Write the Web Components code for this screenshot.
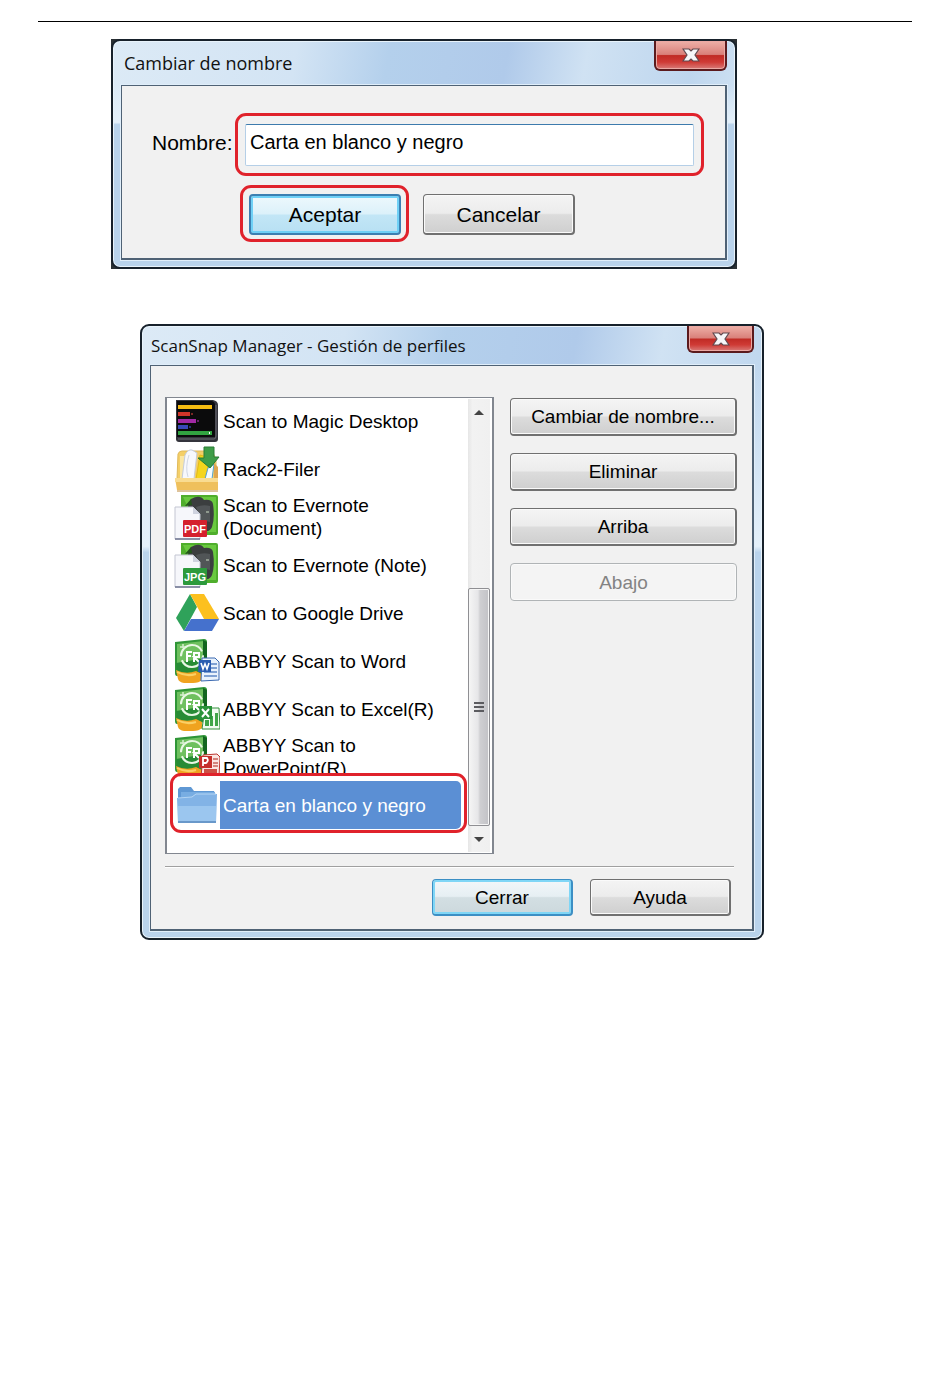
<!DOCTYPE html>
<html lang="es">
<head>
<meta charset="utf-8">
<meta name="viewport" content="width=device-width, initial-scale=1">
<title>Gestión de perfiles</title>
<style>
  body {
    margin: 0;
    background: #fff;
    color: #000;
    font-family: "Liberation Sans", Arial, sans-serif;
  }
  main {
    margin: 21px 38px 0;
    border-top: 1px solid #000;
    padding-top: 17px;
  }
  .rename {
    max-width: 626px;
    margin-left: 73px;
  }
  .manager {
    --title-height: 39px;
    --title-size: 17px;
    --title-indent: 1px;
    --close-width: 67px;
    --close-height: 27px;
    --corner: transparent;
    max-width: 624px;
    margin: 55px 0 0 102px;
  }
</style>
</head>
<body>
<main>
  <win-dialog class="rename" heading="Cambiar de nombre">
    <rename-form></rename-form>
  </win-dialog>
  <win-dialog class="manager" heading="ScanSnap Manager - Gestión de perfiles">
    <profile-manager></profile-manager>
  </win-dialog>
</main>

<script>
function makeTemplate(html) {
  const template = document.createElement('template')
  template.innerHTML = html
  return template
}

const dialogTemplate = makeTemplate(`
<style>
  :host {
    display: block;
    background: var(--corner, #2a3034);
  }
  .frame {
    border: 2px solid #17212b;
    border-radius: 9px;
    padding: 0 8px 7px;
    background:
      linear-gradient(to bottom, transparent 44px, #e4f0fa 36%, #b9d3ec 37%, #b9d3ec),
      linear-gradient(100deg, #dceaf6 0, #d3e4f4 28%, #b4d0ec 42%, #b0caea 60%, #d0e2f3 72%, #bed6ee 88%, #d5e6f5);
    box-shadow: inset 0 0 0 1px #e8f3fb;
  }
  header {
    display: flex;
    align-items: flex-start;
    height: var(--title-height, 44px);
  }
  h2 {
    flex: 1;
    margin: 0;
    padding-left: var(--title-indent, 3px);
    font: var(--title-size, 18px)/var(--title-height, 44px) "Open Sans", "Noto Sans", sans-serif;
    color: #111;
    white-space: nowrap;
  }
  button {
    display: flex;
    align-items: center;
    justify-content: center;
    box-sizing: border-box;
    width: var(--close-width, 73px);
    height: var(--close-height, 30px);
    padding: 0;
    border: 2px solid #5b1a1d;
    border-top: 0;
    border-radius: 0 0 6px 6px;
    background: linear-gradient(#eeb0a8 0, #d9807a 48%, #c02b25 52%, #cf3a35 75%, #d97b78 100%);
    box-shadow: inset 0 0 0 1px #eba9a4;
  }
  .body {
    border: 1px solid #4f6275;
    border-width: 1px 2px 2px 1px;
    background: #f1f1f1;
    box-shadow: 0 0 0 1px #e0eefa;
  }
</style>
<div class="frame">
  <header>
    <h2></h2>
    <button type="button" aria-label="Cerrar ventana">
      <svg width="18" height="16" viewBox="0 0 18 16">
        <path d="M1 2h6l2 2 2-2h6l-4 6 4 6h-6l-2-2-2 2H1l4-6z" fill="#f6f6f8" stroke="#60494f" stroke-width="1.2"/>
      </svg>
    </button>
  </header>
  <div class="body"><slot></slot></div>
</div>`)

customElements.define('win-dialog', class extends HTMLElement {
  constructor() {
    super()

    this.attachShadow({ mode: 'open' })
    this.shadowRoot.appendChild(dialogTemplate.content.cloneNode(true))
  }

  connectedCallback() {
    this.shadowRoot.querySelector('h2').textContent = this.getAttribute('heading')
  }
})

const buttonTemplate = makeTemplate(`
<style>
  :host {
    display: block;
    height: 37px;
    font-size: 19px;
  }
  button {
    display: block;
    box-sizing: border-box;
    width: 100%;
    height: 100%;
    padding: 1px 0 0;
    border: 1px solid #707070;
    border-width: 1px 2px 2px 1px;
    border-radius: 4px;
    background: linear-gradient(#f4f4f4 0, #ececec 48%, #dcdcdc 52%, #cfcfcf 100%);
    box-shadow: inset 0 0 0 1px #fafafa;
    color: #000;
    font: inherit;
  }
  :host([primary]) button {
    border-color: #3c8fc4;
    background: linear-gradient(#f2f7f9 0, #e6eff3 48%, #d3dfe3 52%, #ccd8dc 100%);
    box-shadow: inset 0 0 0 2px #7fd6f6;
  }
  :host([hot]) button {
    padding: 0;
    border-width: 2px;
    border-color: #3c7fb1;
    background: linear-gradient(#edf8fc 0, #dcf1fa 48%, #c2e6f6 52%, #b8e0f3 100%);
    box-shadow: inset 0 0 0 2px #6fd0f6;
  }
  button:disabled {
    border: 1px solid #b0b4b6;
    background: #f4f4f4;
    color: #838383;
  }
</style>
<button type="button"><slot></slot></button>`)

customElements.define('win-button', class extends HTMLElement {
  constructor() {
    super()

    this.attachShadow({ mode: 'open' })
    this.shadowRoot.appendChild(buttonTemplate.content.cloneNode(true))
  }

  connectedCallback() {
    this.shadowRoot.querySelector('button').disabled = this.hasAttribute('disabled')
  }
})

// Red ring drawn over whatever it wraps
const markTemplate = makeTemplate(`
<style>
  :host {
    display: block;
    position: relative;
  }
  :host::after {
    content: "";
    position: absolute;
    inset: var(--mark-inset, -9px -8px -7px -9px);
    border: 3px solid #e0222b;
    border-radius: 11px;
    box-shadow: var(--mark-shadow, none);
    pointer-events: none;
  }
</style>
<slot></slot>`)

customElements.define('red-mark', class extends HTMLElement {
  constructor() {
    super()

    this.attachShadow({ mode: 'open' })
    this.shadowRoot.appendChild(markTemplate.content.cloneNode(true))
  }
})

const renameTemplate = makeTemplate(`
<style>
  :host {
    display: block;
    padding: 38px 31px 23px 30px;
    font-size: 21px;
  }
  .field {
    display: grid;
    grid-template-columns: 93px 1fr;
    align-items: center;
  }
  label {
    padding-bottom: 4px;
  }
  red-mark.input {
    --mark-inset: -11px -10px -10px;
  }
  input {
    display: block;
    box-sizing: border-box;
    width: 100%;
    height: 42px;
    padding: 0 4px 6px;
    border: 1px solid #b5cfe7;
    border-top-color: #3d7bad;
    border-radius: 2px;
    background: #fff;
    color: #000;
    font: 20px "Liberation Sans", Arial, sans-serif;
    outline: none;
  }
  .actions {
    display: flex;
    gap: 22px;
    margin: 28px 0 0 97px;
  }
  win-button {
    width: 152px;
    height: 41px;
    font-size: 21px;
  }
</style>
<div class="field">
  <label for="name">Nombre:</label>
  <red-mark class="input"><input id="name" type="text" value="Carta en blanco y negro"></red-mark>
</div>
<div class="actions">
  <red-mark><win-button hot>Aceptar</win-button></red-mark>
  <win-button>Cancelar</win-button>
</div>`)

customElements.define('rename-form', class extends HTMLElement {
  constructor() {
    super()

    this.attachShadow({ mode: 'open' })
    this.shadowRoot.appendChild(renameTemplate.content.cloneNode(true))
  }
})

const evernote = `
  <path d="M7 1h35q2 0 2 2v36q0 2-2 2H7z" fill="#4fae2c"/>
  <path d="M9 3h33v35H26z" fill="#69c93f"/>
  <path d="M17 5q9-5 13 1 8-1 9 4 2 14-1 23-2 5-7 4-5-1-4-6l-10-4q-4-7-3-15z" fill="#3b3e3f"/>
  <path d="M17 5l-6 7 7-1z" fill="#23551b"/>
  <path d="M22 13q7-3 14-1v16l-9-2z" fill="#515557"/>
  <path d="M32 18h3" stroke="#a5b0a0" stroke-width="1.5"/>
  <path d="M1 13h18l7 7v25H1z" fill="#f6f7fb" stroke="#c3c6d2"/>
  <path d="M19 13v7h7" fill="#cfd3df"/>
  <path d="M1 45h25" stroke="#6e7490" stroke-width="1.5"/>`

const abbyy = `
  <path d="M1 4l29-3q3 0 3 3v32l-30 2q-2 0-2-3z" fill="#2f9637"/>
  <path d="M3 6l27-3v16L3 34z" fill="#6fc05f"/>
  <path d="M2 25l30-5v16L3 38z" fill="#278b35"/>
  <path d="M29 2l4 2v32l-4 1z" fill="#12651f"/>
  <circle cx="18" cy="18" r="11" fill="none" stroke="#e9f7e4" stroke-width="2" stroke-dasharray="30 4"/>
  <path d="M13 24V14h5M13 18h4M20 24V15h5v4h-5l5 5" fill="none" stroke="#fff" stroke-width="2"/>
  <path d="M6 9h5M9 6v4" stroke="#d6efcf" stroke-width="1.5"/>
  <path d="M2 32q10 5 20 1l6 3v6q-3 3-9 3H10q-5-1-6-4z" fill="#f0a31f"/>
  <path d="M3 34q9 5 19 2" fill="none" stroke="#fbd064" stroke-width="2"/>`

const icons = {
  magic: `
    <path d="M2 2h37q5 1 5 5v34q0 3-3 3H5q-3 0-3-3z" fill="#34343c"/>
    <path d="M3 3h35q3 1 3 4v32H3z" fill="#0b0b0c"/>
    <path d="M4 41h36q2 0 2-3V7" fill="none" stroke="#6a6b73"/>
    <path d="M4 7h34v4H4z" fill="#f6bc12"/>
    <path d="M4 14h12v4H4z" fill="#cf352a"/><path d="M17 15h2v2h-2z" fill="#7b2824"/>
    <path d="M4 21h18v4H4z" fill="#a22aa5"/><path d="M23 22h2v2h-2z" fill="#642267"/>
    <path d="M4 27h10v4H4z" fill="#3949b8"/><path d="M15 28h2v2h-2z" fill="#253072"/>
    <path d="M4 33h34v4H4z" fill="#32a341"/><path d="M35 34h1v2h-1z" fill="#fff"/>`,
  rack: `
    <path d="M4 8q1-3 4-3h30l4 8v20H3z" fill="#f4cf68" stroke="#e0b95a"/>
    <path d="M6 10h8v22H6z" fill="#fbe7a4"/>
    <path d="M11 9q3-6 7-5l5 3-3 26H8z" fill="#f7f8fc" stroke="#c5ccda"/>
    <path d="M15 9q-4 12-1 22" fill="none" stroke="#d1d7e5"/>
    <path d="M26 9l10 3-5 21h-9z" fill="#f5d51c" stroke="#e3ba18"/>
    <path d="M34 22l6-4-2 15h-7z" fill="#f4fbff" stroke="#57a3ce"/>
    <path d="M40 17l4 4v12h-4z" fill="#dfa750"/>
    <path d="M30 1h10v10h5L36 22 24 12h6z" fill="#3f9d48" stroke="#2a7d36"/>
    <path d="M1 32h43v12H3z" fill="#efc05c"/>
    <path d="M1 32h43v4H1z" fill="#f9dc91"/>
    <path d="M3 45h41" stroke="#bd8737"/>`,
  evernotePdf: evernote + `
    <rect x="9" y="26" width="24" height="17" rx="1" fill="#d5202d"/>
    <text x="21" y="39" text-anchor="middle" font-size="11" font-weight="bold" fill="#fff">PDF</text>`,
  evernoteJpg: evernote + `
    <rect x="9" y="26" width="24" height="17" rx="1" fill="#2c9a3c"/>
    <text x="21" y="39" text-anchor="middle" font-size="11" font-weight="bold" fill="#fff">JPG</text>`,
  drive: `
    <path d="M16 4l7 13L10 41 2 28z" fill="#2fa25a"/>
    <path d="M16 4h14l15 25H30z" fill="#fcc01e"/>
    <path d="M17 29h28l-7 12H10z" fill="#4571cd"/>`,
  word: abbyy + `
    <path d="M28 20h13l4 4v18l-18 1z" fill="#e9f2fc" stroke="#3a69b0"/>
    <path d="M37 26h6M37 30h6M30 34h13M30 38h13" stroke="#5c87c5" stroke-width="1.5"/>
    <path d="M25 22h12v12H24z" fill="#2b5db1"/>
    <path d="M27 25l2 6 2-5 2 5 2-6" fill="none" stroke="#fff" stroke-width="1.6"/>`,
  excel: abbyy + `
    <path d="M31 22h14l1 21H28z" fill="#f3fbf2" stroke="#35913d"/>
    <path d="M31 40v-6h4v6zM36 40V30h3v10zM41 40V27h3v13z" fill="#41a549"/>
    <path d="M26 20h12v13H25z" fill="#2a933a"/>
    <path d="M28 23l7 8M35 23l-7 8" stroke="#fff" stroke-width="2"/>`,
  powerpoint: abbyy + `
    <path d="M29 21l14-1 3 3-1 20H27z" fill="#fae7e3" stroke="#bd3831"/>
    <path d="M30 35h13v5H30z" fill="#cd5045"/>
    <path d="M39 25h5M39 29h5M39 32h5" stroke="#c8655c" stroke-width="1.5"/>
    <path d="M25 22h13v12H25z" fill="#c5302b"/>
    <path d="M29 32v-8h4q2 3-1 5h-3" fill="none" stroke="#fff" stroke-width="1.8"/>`,
  folder: `
    <path d="M4 7l2-2h11l3 4h20l1 3v24H4z" fill="#5f98d4"/>
    <path d="M7 10h34v5H7z" fill="#78ade2"/>
    <path d="M3 16l14-1 4-3h22l-1 29H4z" fill="#82b3e6"/>
    <path d="M4 24h38v17H4z" fill="#9bc6ef"/>
    <path d="M4 40h38" stroke="#6998ca" stroke-width="2"/>
    <path d="M4 16l14-1 4-3h20" fill="none" stroke="#b4d5f4"/>`
}

const itemTemplate = makeTemplate(`
<style>
  :host {
    display: flex;
    height: 48px;
    font-size: 19px;
    line-height: 23px;
  }
  svg {
    flex: none;
    margin: 1px 0;
    font-family: "Liberation Sans", Arial, sans-serif;
  }
  span {
    flex: 1;
    display: flex;
    align-items: center;
    padding-left: 3px;
  }
  :host([aria-selected="true"]) span {
    background: #5b8fd4;
    color: #fff;
  }
</style>
<svg width="46" height="46" viewBox="0 0 46 46" aria-hidden="true"></svg>
<span><slot></slot></span>`)

customElements.define('profile-item', class extends HTMLElement {
  constructor() {
    super()

    this.attachShadow({ mode: 'open' })
    this.shadowRoot.appendChild(itemTemplate.content.cloneNode(true))
  }

  connectedCallback() {
    this.shadowRoot.querySelector('svg').innerHTML = icons[this.getAttribute('icon')]
  }
})

const scrollTemplate = makeTemplate(`
<style>
  :host {
    display: flex;
    flex-direction: column;
    width: 22px;
    background: linear-gradient(to right, #e6e6e6, #f2f2f2 20%, #f0f0f0);
  }
  button {
    height: 26px;
    padding: 0;
    border: 0;
    background: none;
  }
  svg {
    display: block;
    margin: auto;
  }
  .thumb {
    display: flex;
    flex-direction: column;
    align-items: center;
    justify-content: center;
    gap: 2px;
    box-sizing: border-box;
    height: 238px;
    margin-top: auto;
    border: 1px solid #8f8f93;
    border-radius: 2px;
    background: linear-gradient(to right, #f5f5f5, #e6e6e8 45%, #cfcfd2 55%, #c2c2c6);
    box-shadow: inset 0 0 0 1px #f6f6f6;
  }
  .thumb i {
    width: 10px;
    height: 2px;
    background: #5c5c60;
  }
</style>
<button type="button" aria-label="Subir"><svg width="10" height="5"><path d="M0 5l5-5 5 5z" fill="#444"/></svg></button>
<div class="thumb"><i></i><i></i><i></i></div>
<button type="button" aria-label="Bajar"><svg width="10" height="5"><path d="M0 0h10L5 5z" fill="#444"/></svg></button>`)

customElements.define('scroll-rail', class extends HTMLElement {
  constructor() {
    super()

    this.attachShadow({ mode: 'open' })
    this.shadowRoot.appendChild(scrollTemplate.content.cloneNode(true))
  }
})

const managerTemplate = makeTemplate(`
<style>
  :host {
    display: block;
    padding: 31px 15px 13px 14px;
  }
  .columns {
    display: grid;
    grid-template-columns: 329px 1fr;
    gap: 16px;
  }
  .list {
    display: flex;
    box-sizing: border-box;
    height: 457px;
    padding: 0 4px 0 9px;
    background: #fff;
    box-shadow: inset 2px 1px 0 #828790, inset -2px -1px 0 #828790;
  }
  .items {
    flex: 1;
    margin-right: 7px;
  }
  .items red-mark {
    --mark-inset: -8px -6px -4px -4px;
    --mark-shadow: inset 0 2px 0 3px #fff;
  }
  scroll-rail {
    margin: 2px 0;
  }
  .side {
    display: flex;
    flex-direction: column;
    gap: 17px;
    padding-top: 1px;
  }
  .side win-button {
    height: 38px;
  }
  footer {
    display: flex;
    justify-content: flex-end;
    gap: 17px;
    margin-top: 12px;
    margin-right: 3px;
    padding: 12px 3px 0 0;
    border-top: 1px solid #a0a0a0;
    box-shadow: inset 0 1px 0 #fff;
  }
  footer win-button {
    width: 141px;
  }
</style>
<div class="columns">
  <div class="list">
    <div class="items" role="listbox" aria-label="Perfiles">
      <profile-item role="option" icon="magic">Scan to Magic Desktop</profile-item>
      <profile-item role="option" icon="rack">Rack2-Filer</profile-item>
      <profile-item role="option" icon="evernotePdf">Scan to Evernote (Document)</profile-item>
      <profile-item role="option" icon="evernoteJpg">Scan to Evernote (Note)</profile-item>
      <profile-item role="option" icon="drive">Scan to Google Drive</profile-item>
      <profile-item role="option" icon="word">ABBYY Scan to Word</profile-item>
      <profile-item role="option" icon="excel">ABBYY Scan to Excel(R)</profile-item>
      <profile-item role="option" icon="powerpoint">ABBYY Scan to PowerPoint(R)</profile-item>
      <red-mark><profile-item role="option" icon="folder" aria-selected="true">Carta en blanco y negro</profile-item></red-mark>
    </div>
    <scroll-rail></scroll-rail>
  </div>
  <div class="side">
    <win-button>Cambiar de nombre...</win-button>
    <win-button>Eliminar</win-button>
    <win-button>Arriba</win-button>
    <win-button disabled>Abajo</win-button>
  </div>
</div>
<footer>
  <win-button primary>Cerrar</win-button>
  <win-button>Ayuda</win-button>
</footer>`)

customElements.define('profile-manager', class extends HTMLElement {
  constructor() {
    super()

    this.attachShadow({ mode: 'open' })
    this.shadowRoot.appendChild(managerTemplate.content.cloneNode(true))
  }
})
</script>
</body>
</html>
